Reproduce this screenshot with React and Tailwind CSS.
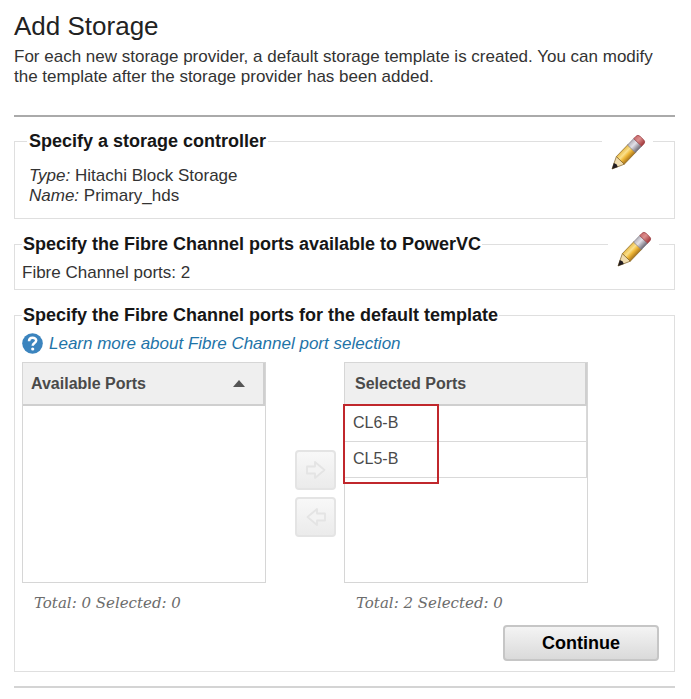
import React, { useState } from 'react';

const PencilIcon = ({ id }) => (
  <svg width="36" height="36" viewBox="0 0 36 36" aria-hidden="true">
    <defs>
      <linearGradient id={`${id}-wood`} x1="0" y1="0" x2="0" y2="1">
        <stop offset="0" stopColor="#e9bc4c" />
        <stop offset="0.35" stopColor="#fae08c" />
        <stop offset="0.6" stopColor="#f0b93a" />
        <stop offset="1" stopColor="#a8731a" />
      </linearGradient>
      <linearGradient id={`${id}-metal`} x1="0" y1="0" x2="0" y2="1">
        <stop offset="0" stopColor="#b5b2bc" />
        <stop offset="0.4" stopColor="#e2e0e8" />
        <stop offset="1" stopColor="#6c6874" />
      </linearGradient>
      <linearGradient id={`${id}-rubber`} x1="0" y1="0" x2="0" y2="1">
        <stop offset="0" stopColor="#c96a6c" />
        <stop offset="0.4" stopColor="#dc8f8e" />
        <stop offset="1" stopColor="#a03438" />
      </linearGradient>
    </defs>
    <g transform="translate(2 35) rotate(-46)">
      <path d="M0 0 L12 -5.500 V5.500 Z" fill="#f0dcae" stroke="#8f7440" strokeWidth="0.8" />
      <path d="M0 0 L5.500 -2.800 L6.500 0 L5.500 2.800 Z" fill="#221c20" />
      <rect x="12" y="-5.500" width="17" height="11" fill={`url(#${id}-wood)`} stroke="#8c6a28" strokeWidth="0.7" />
      <rect x="28" y="-5.500" width="9" height="11" fill={`url(#${id}-metal)`} stroke="#85828c" strokeWidth="0.7" />
      <path d="M37 -5.500 H40 Q43 -5.500 43 -2.500 V2.500 Q43 5.500 40 5.500 H37 Z" fill={`url(#${id}-rubber)`} stroke="#9c4146" strokeWidth="0.7" />
    </g>
  </svg>
);

const HelpIcon = () => (
  <svg width="21" height="21" viewBox="0 0 21 21" aria-hidden="true">
    <circle cx="10.500" cy="10.500" r="10.300" fill="#3b84be" />
    <path d="M7 8.200 C7 3.700 14.200 3.900 14.200 7.600 C14.200 10.200 10.700 10 10.700 12.800" fill="none" stroke="#fff" strokeWidth="2.500" />
    <circle cx="10.700" cy="16" r="1.600" fill="#fff" />
  </svg>
);

const ArrowIcon = ({ left }) => (
  <svg width="22" height="20" viewBox="0 0 22 20" className={left ? 'rotate-180' : ''} aria-hidden="true">
    <path
      d="M2 6.500 H10 V2 L19.500 10 L10 18 V13.500 H2 Z"
      fill="#f3f3f3"
      stroke="#e4e4e4"
      strokeWidth="1.800"
      strokeLinejoin="round"
    />
  </svg>
);

const Section = ({ title, className, legendClass, children }) => (
  <fieldset className={`relative min-w-0 border border-[#dfdfdf] ${className}`}>
    <legend className={`text-lg leading-5 font-bold text-[#161616] ${legendClass}`}>{title}</legend>
    {children}
  </fieldset>
);

const EditButton = ({ label, id, className }) => (
  <button type="button" aria-label={label} className={`absolute flex justify-center bg-white w-[51px] ${className}`}>
    <PencilIcon id={id} />
  </button>
);

const PortList = ({ title, ports, sorted, highlight }) => (
  <div className="flex-1 max-w-[244px]">
    <div className="relative h-[221px] border border-[#d6d6d6]">
      <table className="w-full border-collapse text-left">
        <thead>
          <tr className="h-[42px] bg-[#efefef] border-b-2 border-r-2 border-[#cfcfcf]">
            <th className="px-2 text-base leading-5 font-bold text-[#4a4a4a]">
              <span className={`flex items-center justify-between pr-2.5 ${sorted ? '' : 'pl-0.5'}`}>
                {title}
                {sorted && (
                  <button type="button" aria-label="Sort ports">
                    <svg width="12" height="7" viewBox="0 0 12 7">
                      <path d="M6 0 L12 7 H0 Z" fill="#555" />
                    </svg>
                  </button>
                )}
              </span>
            </th>
          </tr>
        </thead>
        <tbody>
          {ports.map((port) => (
            <tr key={port} className="h-9 border-b border-r border-[#d9d9d9]">
              <td className="px-2 text-base leading-5 text-[#4a4a4a]">{port}</td>
            </tr>
          ))}
        </tbody>
      </table>
      {highlight && <div className="absolute top-[41px] -left-0.5 w-24 h-20 border-2 border-[#c0272c] pointer-events-none" />}
    </div>
    <p className="mt-2.5 pl-3 font-['Georgia','DejaVu_Serif',serif] text-[15px] leading-5 italic text-[#6c6c6c]">
      Total: {ports.length} Selected: 0
    </p>
  </div>
);

const moveButton =
  'flex items-center justify-center w-[41px] h-10 rounded-sm border-2 border-[#e4e4e4] bg-linear-to-b from-[#f8f8f8] to-[#ebebeb]';

const AddStorage = () => {
  const [available] = useState([]);
  const [selected] = useState(['CL6-B', 'CL5-B']);

  return (
    <main className="bg-white pl-3.5 pr-4 pt-2.5 font-['Liberation_Sans',Arial,sans-serif] text-[17px] leading-5 text-[#333]">
      <h1 className="text-[26px] leading-8 text-[#222]">Add Storage</h1>
      <p className="mt-[5px]">
        For each new storage provider, a default storage template is created. You can modify the template after the
        storage provider has been added.
      </p>
      <hr className="mt-7 border-t-2 border-[#aaa]" />

      <Section title="Specify a storage controller" className="mt-3.5 px-3 pb-3" legendClass="px-0.5">
        <div className="pt-[15px] px-0.5">
          <p><em>Type:</em> Hitachi Block Storage</p>
          <p><em>Name:</em> Primary_hds</p>
        </div>
        <EditButton label="Edit storage controller" id="controller" className="-top-[17px] right-[21px]" />
      </Section>

      <Section
        title="Specify the Fibre Channel ports available to PowerVC"
        className="mt-[15px] px-[7px] pb-1.5"
        legendClass="px-px"
      >
        <p className="pt-[9px]">Fibre Channel ports: 2</p>
        <EditButton label="Edit Fibre Channel ports" id="ports" className="-top-[23px] right-[15px]" />
      </Section>

      <Section
        title="Specify the Fibre Channel ports for the default template"
        className="mt-[15px] px-[7px] pb-2.5"
        legendClass="px-px"
      >
        <a href="#learn" className="mt-2 flex items-center gap-1.5 italic text-[#1f74a8]">
          <HelpIcon />
          Learn more about Fibre Channel port selection
        </a>
        <div className="mt-2 flex">
          <PortList title="Available Ports" ports={available} sorted />
          <div className="flex flex-col gap-[7px] pt-[88px] pl-[29px] pr-2">
            <button type="button" aria-label="Add port" className={moveButton} disabled>
              <ArrowIcon />
            </button>
            <button type="button" aria-label="Remove port" className={moveButton} disabled>
              <ArrowIcon left />
            </button>
          </div>
          <PortList title="Selected Ports" ports={selected} highlight />
        </div>
        <div className="mt-3 flex justify-end pr-2">
          <button
            type="button"
            className="w-[156px] h-9 rounded-sm border-2 border-[#c6c6c6] bg-linear-to-b from-[#f4f4f4] to-[#dadada] text-lg leading-5 font-bold text-black"
          >
            Continue
          </button>
        </div>
      </Section>
      <hr className="mt-3.5 border-t-2 border-[#d4d4d4]" />
    </main>
  );
};

export default AddStorage;
